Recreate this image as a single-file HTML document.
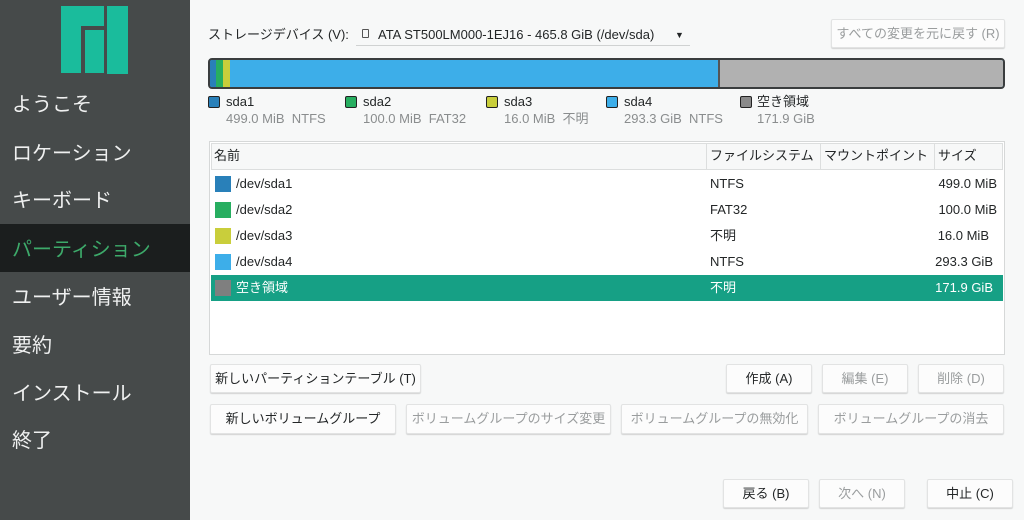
<!DOCTYPE html>
<html><head><meta charset="utf-8"><style>
*{box-sizing:border-box;margin:0;padding:0}
body{width:1024px;height:520px;overflow:hidden;background:#f7f8f8;font-family:"Liberation Sans","Noto Sans CJK JP",sans-serif;position:relative;color:#232627;line-height:16px}
.side{position:absolute;left:0;top:0;width:190px;height:520px;background:#464a4a}
.si{position:absolute;left:12px;color:#eff0f0;font-size:20px;line-height:24px;height:24px}
.sel{position:absolute;left:0;top:224px;width:190px;height:48px;background:#1b1e1e}
.a{position:absolute;white-space:nowrap}
.f13{font-size:13px;line-height:16px;height:16px}
.btn{position:absolute;background:#fcfcfc;border:1px solid #e2e3e3;border-radius:2px;box-shadow:0 1px 1px rgba(0,0,0,.15);font-size:13px;text-align:center;color:#232627;white-space:nowrap}
.dis{color:#9a9d9e}
.sq{position:absolute;width:12px;height:12px;border:1px solid #222;border-radius:2px}
.row{position:absolute;left:211px;width:792px;height:26px;font-size:13px}
.row span{position:absolute;top:5px;line-height:16px;height:16px}
.row i{position:absolute;left:4px;top:5px;width:16px;height:16px}
</style></head><body>
<div class="side">
 <svg style="position:absolute;left:61px;top:6px" width="68" height="69"><rect x="0" y="0" width="43" height="67" fill="#1abc9c"/><rect x="20" y="20" width="23" height="47" fill="#464a4a"/><rect x="24" y="24" width="19" height="43" fill="#1abc9c"/><rect x="43" y="0" width="3" height="69" fill="#464a4a"/><rect x="46" y="0" width="21" height="68" fill="#1abc9c"/></svg>
 <div class="sel"></div>
 <div class="si" style="top:93px">ようこそ</div>
 <div class="si" style="top:142px">ロケーション</div>
 <div class="si" style="top:189px">キーボード</div>
 <div class="si" style="top:238px;color:#3daa6a">パーティション</div>
 <div class="si" style="top:286px">ユーザー情報</div>
 <div class="si" style="top:334px">要約</div>
 <div class="si" style="top:382px">インストール</div>
 <div class="si" style="top:429px">終了</div>
</div>
<div class="a f13" style="left:208px;top:27px">ストレージデバイス (V):</div>
<div class="a" style="left:362px;top:29px;width:7px;height:9px;border:1px solid #555;border-radius:1px"></div>
<div class="a f13" style="left:378px;top:27px">ATA ST500LM000-1EJ16 - 465.8 GiB (/dev/sda)</div>
<div class="a" style="left:675px;top:29px;font-size:9px;line-height:12px">▼</div>
<div class="a" style="left:356px;top:45px;width:334px;height:1px;background:#d0d2d2"></div>
<div class="btn dis" style="left:831px;top:19px;width:174px;height:29px;line-height:27px">すべての変更を元に戻す (R)</div>
<div class="a" style="left:208px;top:58px;width:797px;height:31px;border:2px solid #3a3d3e;border-radius:4px;overflow:hidden;background:#3daee9">
 <div class="a" style="left:0;top:0;width:6px;height:27px;background:#2980b9"></div>
 <div class="a" style="left:6px;top:0;width:7px;height:27px;background:#27ae60"></div>
 <div class="a" style="left:13px;top:0;width:7px;height:27px;background:#c9ce3b"></div>
 <div class="a" style="left:508px;top:0;width:285px;height:27px;background:#b1b1b1;border-left:2px solid #555"></div>
</div>
<div class="sq" style="left:208px;top:96px;background:#2980b9"></div><div class="a f13" style="left:226px;top:94px">sda1</div><div class="a f13" style="left:226px;top:111px;color:#8a8d8e">499.0 MiB&nbsp; NTFS</div>
<div class="sq" style="left:345px;top:96px;background:#27ae60"></div><div class="a f13" style="left:363px;top:94px">sda2</div><div class="a f13" style="left:363px;top:111px;color:#8a8d8e">100.0 MiB&nbsp; FAT32</div>
<div class="sq" style="left:486px;top:96px;background:#c9ce3b"></div><div class="a f13" style="left:504px;top:94px">sda3</div><div class="a f13" style="left:504px;top:111px;color:#8a8d8e">16.0 MiB&nbsp; 不明</div>
<div class="sq" style="left:606px;top:96px;background:#3daee9"></div><div class="a f13" style="left:624px;top:94px">sda4</div><div class="a f13" style="left:624px;top:111px;color:#8a8d8e">293.3 GiB&nbsp; NTFS</div>
<div class="sq" style="left:740px;top:96px;background:#8a8a8a"></div><div class="a f13" style="left:757px;top:94px">空き領域</div><div class="a f13" style="left:757px;top:111px;color:#8a8d8e">171.9 GiB</div>
<div class="a" style="left:209px;top:141px;width:796px;height:214px;background:#fff;border:1px solid #d6d8d8"></div>
<div class="a" style="left:211px;top:143px;width:792px;height:27px;background:#f7f8f8;border:1px solid #dcdede"></div>
<div class="a" style="left:706px;top:144px;width:1px;height:26px;background:#dcdede"></div>
<div class="a" style="left:820px;top:144px;width:1px;height:26px;background:#dcdede"></div>
<div class="a" style="left:934px;top:144px;width:1px;height:26px;background:#dcdede"></div>
<div class="a f13" style="left:214px;top:148px">名前</div>
<div class="a f13" style="left:710px;top:148px">ファイルシステム</div>
<div class="a f13" style="left:824px;top:148px">マウントポイント</div>
<div class="a f13" style="left:938px;top:148px">サイズ</div>
<div class="row" style="top:171px"><i style="background:#2980b9"></i><span style="left:25px">/dev/sda1</span><span style="left:499px">NTFS</span><span style="right:6px">499.0 MiB</span></div>
<div class="row" style="top:197px"><i style="background:#27ae60"></i><span style="left:25px">/dev/sda2</span><span style="left:499px">FAT32</span><span style="right:6px">100.0 MiB</span></div>
<div class="row" style="top:223px"><i style="background:#c9ce3b"></i><span style="left:25px">/dev/sda3</span><span style="left:499px">不明</span><span style="right:14px">16.0 MiB</span></div>
<div class="row" style="top:249px"><i style="background:#3daee9"></i><span style="left:25px">/dev/sda4</span><span style="left:499px">NTFS</span><span style="right:10px">293.3 GiB</span></div>
<div class="row" style="top:275px;background:#16a085;color:#fff"><i style="background:#7f7f7f"></i><span style="left:25px">空き領域</span><span style="left:499px">不明</span><span style="right:10px">171.9 GiB</span></div>
<div class="btn" style="left:210px;top:364px;width:211px;height:29px;line-height:27px">新しいパーティションテーブル (T)</div>
<div class="btn" style="left:726px;top:364px;width:86px;height:29px;line-height:27px">作成 (A)</div>
<div class="btn dis" style="left:822px;top:364px;width:86px;height:29px;line-height:27px">編集 (E)</div>
<div class="btn dis" style="left:918px;top:364px;width:86px;height:29px;line-height:27px">削除 (D)</div>
<div class="btn" style="left:210px;top:404px;width:186px;height:30px;line-height:28px">新しいボリュームグループ</div>
<div class="btn dis" style="left:406px;top:404px;width:205px;height:30px;line-height:28px">ボリュームグループのサイズ変更</div>
<div class="btn dis" style="left:621px;top:404px;width:187px;height:30px;line-height:28px">ボリュームグループの無効化</div>
<div class="btn dis" style="left:818px;top:404px;width:186px;height:30px;line-height:28px">ボリュームグループの消去</div>
<div class="btn" style="left:723px;top:479px;width:86px;height:29px;line-height:27px">戻る (B)</div>
<div class="btn dis" style="left:819px;top:479px;width:86px;height:29px;line-height:27px">次へ (N)</div>
<div class="btn" style="left:927px;top:479px;width:86px;height:29px;line-height:27px">中止 (C)</div>
</body></html>
